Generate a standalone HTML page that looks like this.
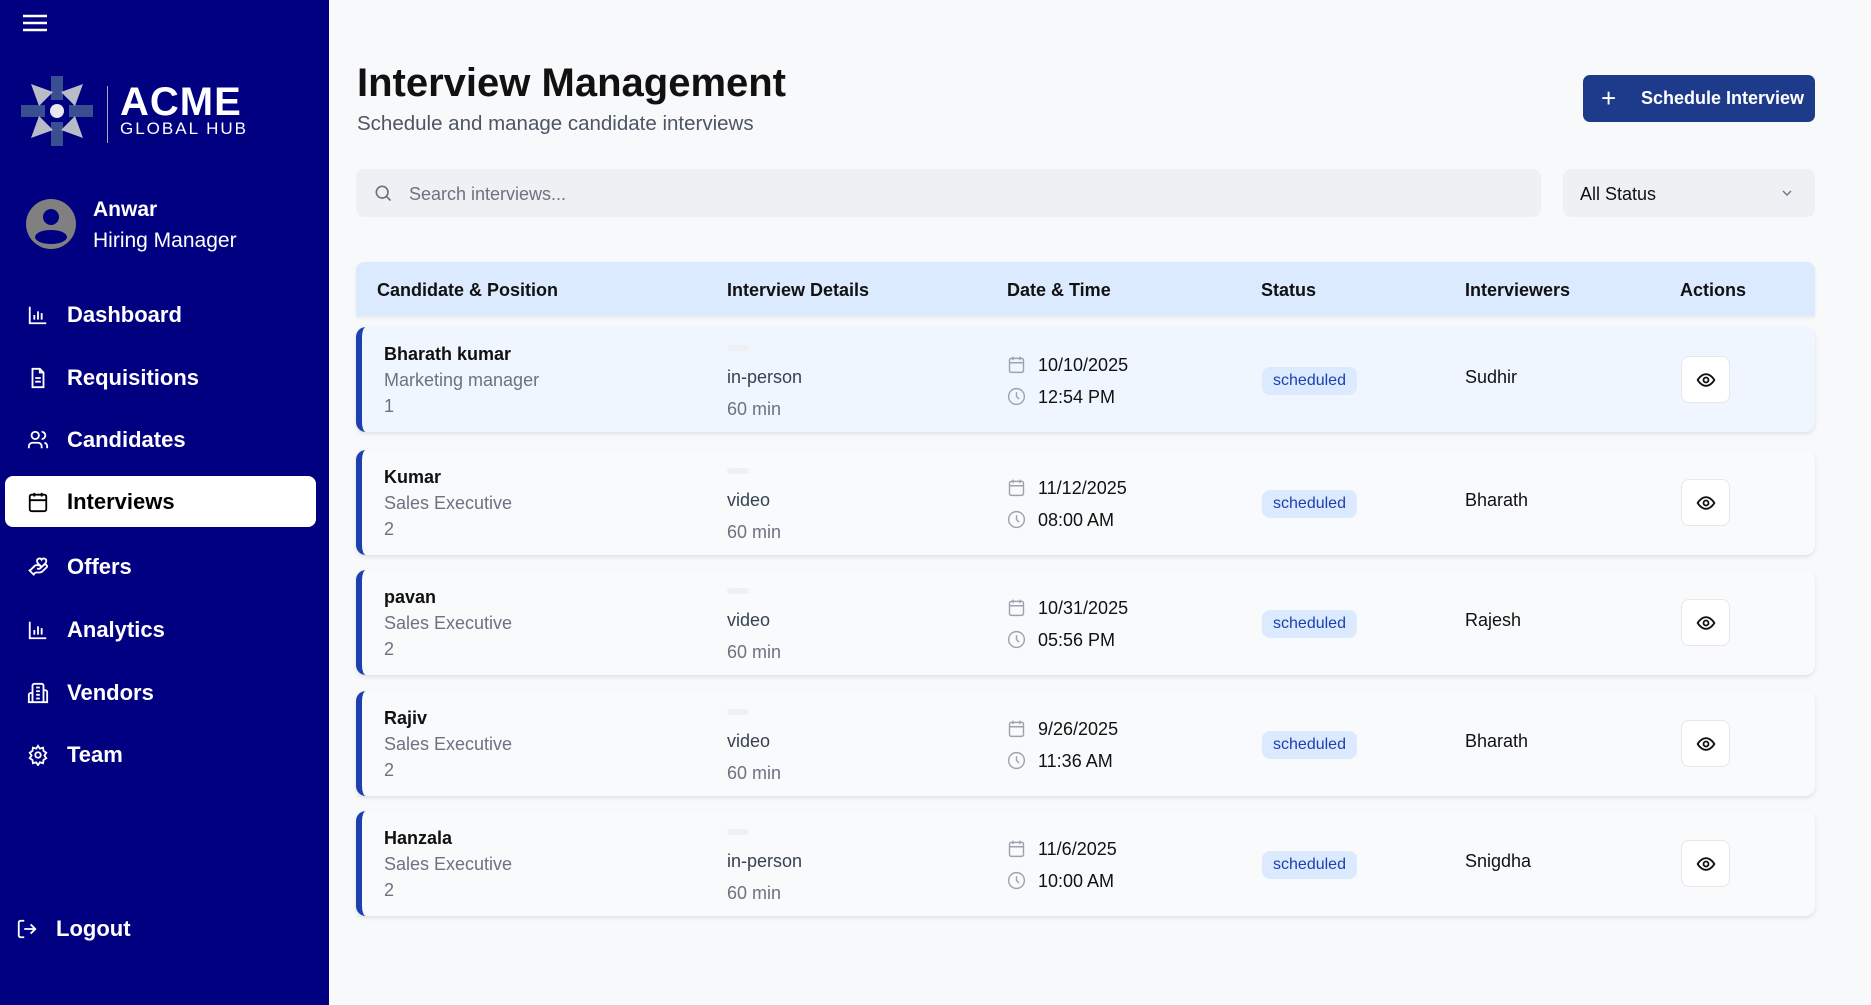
<!DOCTYPE html>
<html><head><meta charset="utf-8"><style>
*{box-sizing:border-box;margin:0;padding:0}
body{width:1871px;height:1005px;overflow:hidden;background:#f8f9fb;font-family:"Liberation Sans",sans-serif;position:relative;color:#111}
.sb{position:absolute;left:0;top:0;width:329px;height:1005px;background:#000080;color:#fff}
.abs{position:absolute}
.nav{position:absolute;left:5px;width:311px;height:51px;display:flex;align-items:center;font-size:22px;font-weight:bold;color:#fff}
.nav svg{position:absolute;left:22px;width:22px;height:22px}
.nav span{position:absolute;left:62px}
.nav.act{background:#fff;color:#000;border-radius:8px}
.th{position:absolute;top:262px;left:356px;width:1459px;height:54px;background:#dbeafe;border-radius:8px 8px 0 0;box-shadow:0 2px 3px rgba(0,0,0,.06)}
.th div{position:absolute;top:18px;font-size:18px;font-weight:bold;color:#111}
.row{position:absolute;left:356px;width:1459px;height:105px;background:#f8fafc;border-left:6px solid #1e40af;border-radius:10px;box-shadow:0 2px 4px rgba(0,0,0,.1)}
.row.h{background:#eff6ff}
.row .t{position:absolute;font-size:18px}
.g{color:#6b7280}
.pill{position:absolute;left:365px;top:18px;width:22px;height:6px;background:#eef0f3;border-radius:3px}
.badge{position:absolute;left:900px;top:40px;width:95px;height:28px;background:#dbeafe;color:#1e40af;border-radius:8px;font-size:16px;text-align:center;line-height:28px}
.eye{position:absolute;left:1319px;top:29px;width:49px;height:47px;background:#fff;border:1px solid #e5e7eb;border-radius:8px;display:flex;align-items:center;justify-content:center}
.ic{position:absolute;width:21px;height:21px}
</style></head><body>
<div class="sb">
<svg class="abs" style="left:22px;top:13px" width="26" height="20" viewBox="0 0 26 20"><path d="M1 3h24M1 10h24M1 17h24" stroke="#fff" stroke-width="2.4"/></svg>
<svg class="abs" style="left:21px;top:74px" width="72" height="74" viewBox="0 0 72 74"><path d="M30 2h12v24h-12zM30 48h12v24h-12zM0 31h24v12h-24zM48 31h24v12h-24z" fill="#3a4f8f"/><path d="M10 10l22 8-8 8-6 6zM62 10l-8 22-8-8-6-6zM10 64l8-22 8 8 6 6zM62 64l-22-8 8-8 6-6z" fill="#b8bcc6"/><circle cx="36" cy="37" r="7" fill="#e8e8ee"/></svg>
<div class="abs" style="left:107px;top:86px;width:1px;height:57px;background:#aab"></div>
<div class="abs" style="left:120px;top:82px;font-size:40px;font-weight:bold;letter-spacing:1px;line-height:40px">ACME</div>
<div class="abs" style="left:120px;top:120px;font-size:17px;letter-spacing:2px;line-height:18px">GLOBAL HUB</div>
<svg class="abs" style="left:26px;top:199px" width="50" height="50" viewBox="0 0 50 50"><circle cx="25" cy="25" r="25" fill="#808080"/><circle cx="25" cy="18" r="8" fill="#000080"/><ellipse cx="25" cy="38" rx="16" ry="7" fill="#000080"/></svg>
<div class="abs" style="left:93px;top:198px;font-size:21px;font-weight:bold">Anwar</div>
<div class="abs" style="left:93px;top:229px;font-size:21px">Hiring Manager</div>
<div class="nav" style="top:289px"><svg viewBox="0 0 24 24" fill="none" stroke="#fff" stroke-width="2"><path d="M3 3v18h18M8 17v-5M12 17V8M16 17v-7"/></svg><span>Dashboard</span></div>
<div class="nav" style="top:352px"><svg viewBox="0 0 24 24" fill="none" stroke="#fff" stroke-width="2"><path d="M14 2H6v20h12V6zM14 2v4h4M9 12h6M9 16h6"/></svg><span>Requisitions</span></div>
<div class="nav" style="top:414px"><svg viewBox="0 0 24 24" fill="none" stroke="#fff" stroke-width="2"><circle cx="9" cy="7" r="4"/><path d="M2 21v-2a4 4 0 014-4h6a4 4 0 014 4v2M16 3a4 4 0 010 8M22 21v-2a4 4 0 00-3-4"/></svg><span>Candidates</span></div>
<div class="nav act" style="top:476px"><svg viewBox="0 0 24 24" fill="none" stroke="#000" stroke-width="2"><rect x="3" y="4" width="18" height="18" rx="2"/><path d="M16 2v4M8 2v4M3 10h18"/></svg><span>Interviews</span></div>
<div class="nav" style="top:541px"><svg viewBox="0 0 24 24" fill="none" stroke="#fff" stroke-width="2"><path d="M11 14h2a2 2 0 000-4h-3c-.6 0-1.1.2-1.4.6L3 16M7 20l1.6-1.4c.3-.4.8-.6 1.4-.6h4c1.1 0 2.1-.4 2.8-1.2l4.6-4.4a2 2 0 00-2.8-2.8L14.6 13M2 15l6 6M19.5 8.5c.7-.7 1.5-1.6 1.5-2.7A2.7 2.7 0 0016 4a2.7 2.7 0 00-5 1.8c0 1.2.8 2 1.5 2.8L16 12z"/></svg><span>Offers</span></div>
<div class="nav" style="top:604px"><svg viewBox="0 0 24 24" fill="none" stroke="#fff" stroke-width="2"><path d="M3 3v18h18M8 17v-5M12 17V8M16 17v-7"/></svg><span>Analytics</span></div>
<div class="nav" style="top:667px"><svg viewBox="0 0 24 24" fill="none" stroke="#fff" stroke-width="2"><path d="M6 22V4a2 2 0 012-2h8a2 2 0 012 2v18zM6 12H4a2 2 0 00-2 2v8h4M18 9h2a2 2 0 012 2v11h-4M10 6h4M10 10h4M10 14h4M10 18h4"/></svg><span>Vendors</span></div>
<div class="nav" style="top:729px"><svg viewBox="0 0 24 24" fill="none" stroke="#fff" stroke-width="2"><circle cx="12" cy="12" r="3"/><path d="M12 2l2 3 3.5-1 .5 3.5 3 2-2 3 2 3-3 2-.5 3.5-3.5-1-2 3-2-3-3.5 1-.5-3.5-3-2 2-3-2-3 3-2 .5-3.5 3.5 1z"/></svg><span>Team</span></div>
<div class="nav" style="top:903px;left:-4px"><svg viewBox="0 0 24 24" fill="none" stroke="#fff" stroke-width="2" style="left:20px"><path d="M9 21H5a2 2 0 01-2-2V5a2 2 0 012-2h4M16 17l5-5-5-5M21 12H9"/></svg><span style="left:60px">Logout</span></div>
</div>

<div class="abs" style="left:357px;top:61px;font-size:40px;font-weight:bold;color:#111">Interview Management</div>
<div class="abs" style="left:357px;top:112px;font-size:20.5px;color:#4b5563">Schedule and manage candidate interviews</div>
<div class="abs" style="left:1583px;top:75px;width:232px;height:47px;background:#1e3a8a;border-radius:7px;color:#fff;font-size:18px;font-weight:bold;line-height:47px"><span style="position:absolute;left:18px;font-size:26px;font-weight:normal">+</span><span style="position:absolute;left:58px">Schedule Interview</span></div>

<div class="abs" style="left:356px;top:169px;width:1185px;height:48px;background:#eff0f3;border-radius:8px"></div>
<svg class="abs" style="left:373px;top:183px" width="20" height="20" viewBox="0 0 24 24" fill="none" stroke="#6b7280" stroke-width="2"><circle cx="11" cy="11" r="7"/><path d="M21 21l-5-5"/></svg>
<div class="abs" style="left:409px;top:184px;font-size:18px;color:#6b7280">Search interviews...</div>
<div class="abs" style="left:1563px;top:169px;width:252px;height:48px;background:#eff0f3;border-radius:8px"></div>
<div class="abs" style="left:1580px;top:184px;font-size:18px;color:#111">All Status</div>
<svg class="abs" style="left:1779px;top:185px" width="16" height="16" viewBox="0 0 24 24" fill="none" stroke="#6b7280" stroke-width="2"><path d="M6 9l6 6 6-6"/></svg>

<div class="th"><div style="left:21px">Candidate &amp; Position</div><div style="left:371px">Interview Details</div><div style="left:651px">Date &amp; Time</div><div style="left:905px">Status</div><div style="left:1109px">Interviewers</div><div style="left:1324px">Actions</div></div>

<div id="rows"></div>
<script>
var d=[[327,"Bharath kumar","Marketing manager","1","in-person","10/10/2025","12:54 PM","Sudhir",1],[450,"Kumar","Sales Executive","2","video","11/12/2025","08:00 AM","Bharath"],[570,"pavan","Sales Executive","2","video","10/31/2025","05:56 PM","Rajesh"],[691,"Rajiv","Sales Executive","2","video","9/26/2025","11:36 AM","Bharath"],[811,"Hanzala","Sales Executive","2","in-person","11/6/2025","10:00 AM","Snigdha"]];
var cal='<svg class="ic" style="left:644px;top:27px" viewBox="0 0 24 24" fill="none" stroke="#9ca3af" stroke-width="1.6"><rect x="4" y="5" width="16" height="16" rx="2"/><path d="M16 3v4M8 3v4M4 10h16"/></svg>';
var clk='<svg class="ic" style="left:644px;top:59px" viewBox="0 0 24 24" fill="none" stroke="#9ca3af" stroke-width="1.6"><circle cx="12" cy="12" r="9"/><path d="M12 7v5l3 3"/></svg>';
var eye='<svg width="20" height="20" viewBox="0 0 24 24" fill="none" stroke="#111" stroke-width="2.2"><path d="M2 12s4-7 10-7 10 7 10 7-4 7-10 7S2 12 2 12z"/><circle cx="12" cy="12" r="3"/></svg>';
var h='';
d.forEach(function(r){h+='<div class="row'+(r[8]?' h':'')+'" style="top:'+r[0]+'px"><div class="t" style="left:22px;top:17px;font-weight:bold">'+r[1]+'</div><div class="t g" style="left:22px;top:43px">'+r[2]+'</div><div class="t g" style="left:22px;top:69px">'+r[3]+'</div><div class="pill"></div><div class="t" style="left:365px;top:40px;color:#374151">'+r[4]+'</div><div class="t g" style="left:365px;top:72px">60 min</div>'+cal+clk+'<div class="t" style="left:676px;top:28px">'+r[5]+'</div><div class="t" style="left:676px;top:60px">'+r[6]+'</div><div class="badge">scheduled</div><div class="t" style="left:1103px;top:40px">'+r[7]+'</div><div class="eye">'+eye+'</div></div>';});
document.getElementById('rows').innerHTML=h;
</script>
</body></html>
